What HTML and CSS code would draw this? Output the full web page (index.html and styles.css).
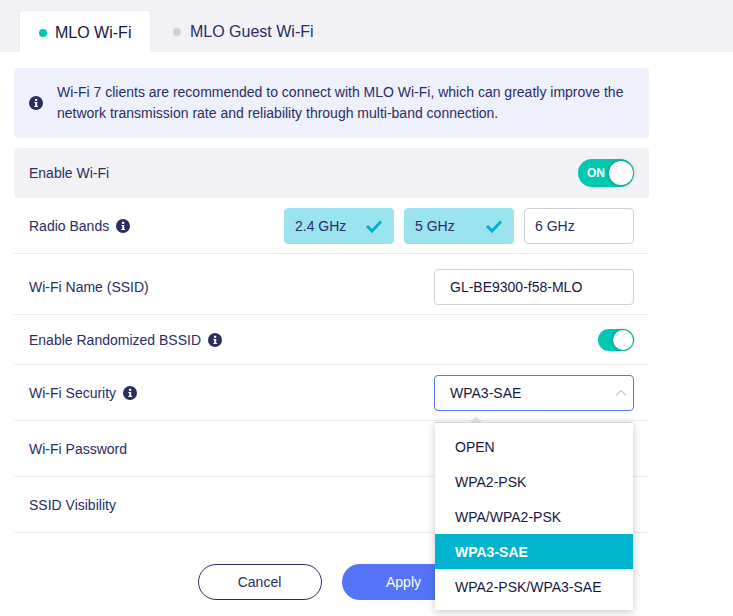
FILE: index.html
```html
<!DOCTYPE html>
<html lang="en">
<head>
<meta charset="utf-8">
<title>MLO Wi-Fi</title>
<link rel="stylesheet" href="styles.css">
</head>
<body>
<svg class="defs" width="0" height="0" aria-hidden="true">
  <symbol id="info" viewBox="0 0 14 14">
    <circle cx="7" cy="7" r="7" fill="#2b2c63"/>
    <rect x="6" y="2.8" width="2.2" height="2.1" fill="#fff"/>
    <path d="M5.4 6h2.8v3.9h.9V11H5.3V9.9h.9V7.1h-.8z" fill="#fff"/>
  </symbol>
  <symbol id="check" viewBox="0 0 18 14">
    <path d="M2 7l5 5 9-9.5" fill="none" stroke="#00b4d0" stroke-width="3"/>
  </symbol>
</svg>
<div class="tabs">
  <div class="tab tab-active"><span class="dot dot-on"></span>MLO Wi-Fi</div>
  <div class="tab"><span class="dot dot-off"></span>MLO Guest Wi-Fi</div>
</div>
<main class="content">
  <div class="notice">
    <svg class="icon"><use href="#info"/></svg>
    <p>Wi-Fi 7 clients are recommended to connect with MLO Wi-Fi, which can greatly improve the network transmission rate and reliability through multi-band connection.</p>
  </div>
  <div class="row row-enable">
    <span class="label">Enable Wi-Fi</span>
    <span class="switch switch-text"><span class="switch-on">ON</span><span class="knob"></span></span>
  </div>
  <div class="row row-radio">
    <span class="label">Radio Bands <svg class="icon"><use href="#info"/></svg></span>
    <div class="bands">
      <span class="band band-sel">2.4 GHz<svg class="check"><use href="#check"/></svg></span>
      <span class="band band-sel">5 GHz<svg class="check"><use href="#check"/></svg></span>
      <span class="band">6 GHz</span>
    </div>
  </div>
  <div class="row row-ssid">
    <span class="label">Wi-Fi Name (SSID)</span>
    <span class="field">GL-BE9300-f58-MLO</span>
  </div>
  <div class="row row-bssid">
    <span class="label">Enable Randomized BSSID <svg class="icon"><use href="#info"/></svg></span>
    <span class="switch switch-small"><span class="knob"></span></span>
  </div>
  <div class="row row-tall">
    <span class="label">Wi-Fi Security <svg class="icon"><use href="#info"/></svg></span>
    <div class="select-wrap">
      <span class="field field-focus">WPA3-SAE
        <svg class="chevron" viewBox="0 0 12 7"><path d="M1 6.5l5-5 5 5" fill="none" stroke="#c8c9d0" stroke-width="1.2"/></svg>
      </span>
      <div class="menu">
        <span class="arrow"></span>
        <div class="option">OPEN</div>
        <div class="option">WPA2-PSK</div>
        <div class="option">WPA/WPA2-PSK</div>
        <div class="option option-sel">WPA3-SAE</div>
        <div class="option">WPA2-PSK/WPA3-SAE</div>
      </div>
    </div>
  </div>
  <div class="row row-tall"><span class="label">Wi-Fi Password</span></div>
  <div class="row row-tall"><span class="label">SSID Visibility</span></div>
  <div class="actions">
    <button class="btn btn-cancel">Cancel</button>
    <button class="btn btn-apply">Apply</button>
  </div>
</main>
</body>
</html>
```
FILE: styles.css
```css
* { box-sizing: border-box; }
html, body { margin: 0; padding: 0; height: 616px; overflow: hidden; background: #fff; }
body { font-family: "Liberation Sans", Arial, sans-serif; font-size: 14px; color: #2b2c63; }
.defs { position: absolute; }
.tabs { height: 52px; background: #f1f1f6; padding: 10px 0 0 19px; display: flex; }
.tab { height: 42px; width: 132px; display: flex; align-items: center; padding: 2px 0 0 20px; font-size: 16px; color: #2b2c63; white-space: nowrap; }
.tab-active { background: #fff; color: #16173f; border-radius: 3px 3px 0 0; border: 1px solid #ebebf0; border-bottom: 0; padding-left: 19px; margin-right: 2px; }
.dot { width: 8px; height: 8px; border-radius: 50%; margin-right: 8px; flex: none; }
.dot-on { background: #00c9b1; }
.dot-off { background: #cfd0d6; margin-right: 9px; }
.content { width: 635px; margin-left: 14px; padding-top: 16px; }
.notice { height: 70px; background: #eef1fc; border-radius: 4px; display: flex; align-items: center; padding: 0 15px; gap: 14px; margin-bottom: 10px; }
.notice p { margin: 0; line-height: 21px; }
.icon { width: 14px; height: 14px; flex: none; vertical-align: -2px; margin-left: 3px; }
.notice .icon { margin-left: 0; }
.row { display: flex; align-items: center; justify-content: space-between; padding: 0 15px; border-bottom: 1px solid #ebebf0; }
.row-enable { height: 50px; background: #f1f1f6; border-radius: 4px; border-bottom: 0; }
.row-radio { height: 56px; padding-top: 1px; }
.row-ssid { height: 61px; padding-top: 6px; }
.row-bssid { height: 50px; }
.row-tall { height: 56px; }
.label { white-space: nowrap; }
.switch { background: #00c9b1; display: flex; align-items: center; justify-content: flex-end; color: #fff; font-weight: 700; font-size: 12px; }
.switch-text { width: 56px; height: 28px; border-radius: 14px; padding-right: 1px; }
.switch-on { margin-right: auto; padding-left: 9px; }
.switch-text .knob { width: 24px; height: 24px; }
.switch-small { width: 36px; height: 22px; border-radius: 11px; padding-right: 1px; }
.switch-small .knob { width: 20px; height: 20px; }
.knob { border-radius: 50%; background: #fff; box-shadow: 0 0 4px rgba(0, 0, 0, .35); }
.bands { display: flex; gap: 10px; }
.band { width: 110px; height: 36px; border: 1px solid #cfd0d6; border-radius: 4px; display: flex; align-items: center; justify-content: space-between; padding: 0 10px; }
.band-sel { background: #9ae3ef; border-color: #9ae3ef; }
.check { width: 18px; height: 14px; }
.select-wrap { position: relative; }
.field { width: 200px; height: 36px; border: 1px solid #cfd0d6; border-radius: 4px; display: flex; align-items: center; padding-left: 15px; color: #16173f; }
.field-focus { border-color: #5473f6; position: relative; }
.chevron { position: absolute; right: 6px; top: 13px; width: 12px; height: 7px; }
.menu { position: absolute; left: 1px; top: 47px; width: 198px; height: 188px; background: #fff; padding-top: 6px; border-top: 1px solid #cfd0d6; box-shadow: 0 2px 8px rgba(0, 0, 0, .22); z-index: 2; }
.arrow { position: absolute; left: 35px; top: -6px; border: 6px solid transparent; border-top: 0; border-bottom: 5px solid #d8d8de; }
.option { height: 35px; line-height: 37px; padding-left: 20px; color: #16173f; white-space: nowrap; }
.option-sel { background: #00b4d0; color: #fff; font-weight: 700; }
.actions { display: flex; justify-content: center; gap: 20px; padding-top: 31px; }
.btn { width: 124px; height: 36px; border-radius: 18px; font: inherit; cursor: pointer; }
.btn-cancel { background: #fff; border: 1px solid #2b2c63; color: #2b2c63; }
.btn-apply { background: #5473f6; border: 0; color: #fff; }
```
